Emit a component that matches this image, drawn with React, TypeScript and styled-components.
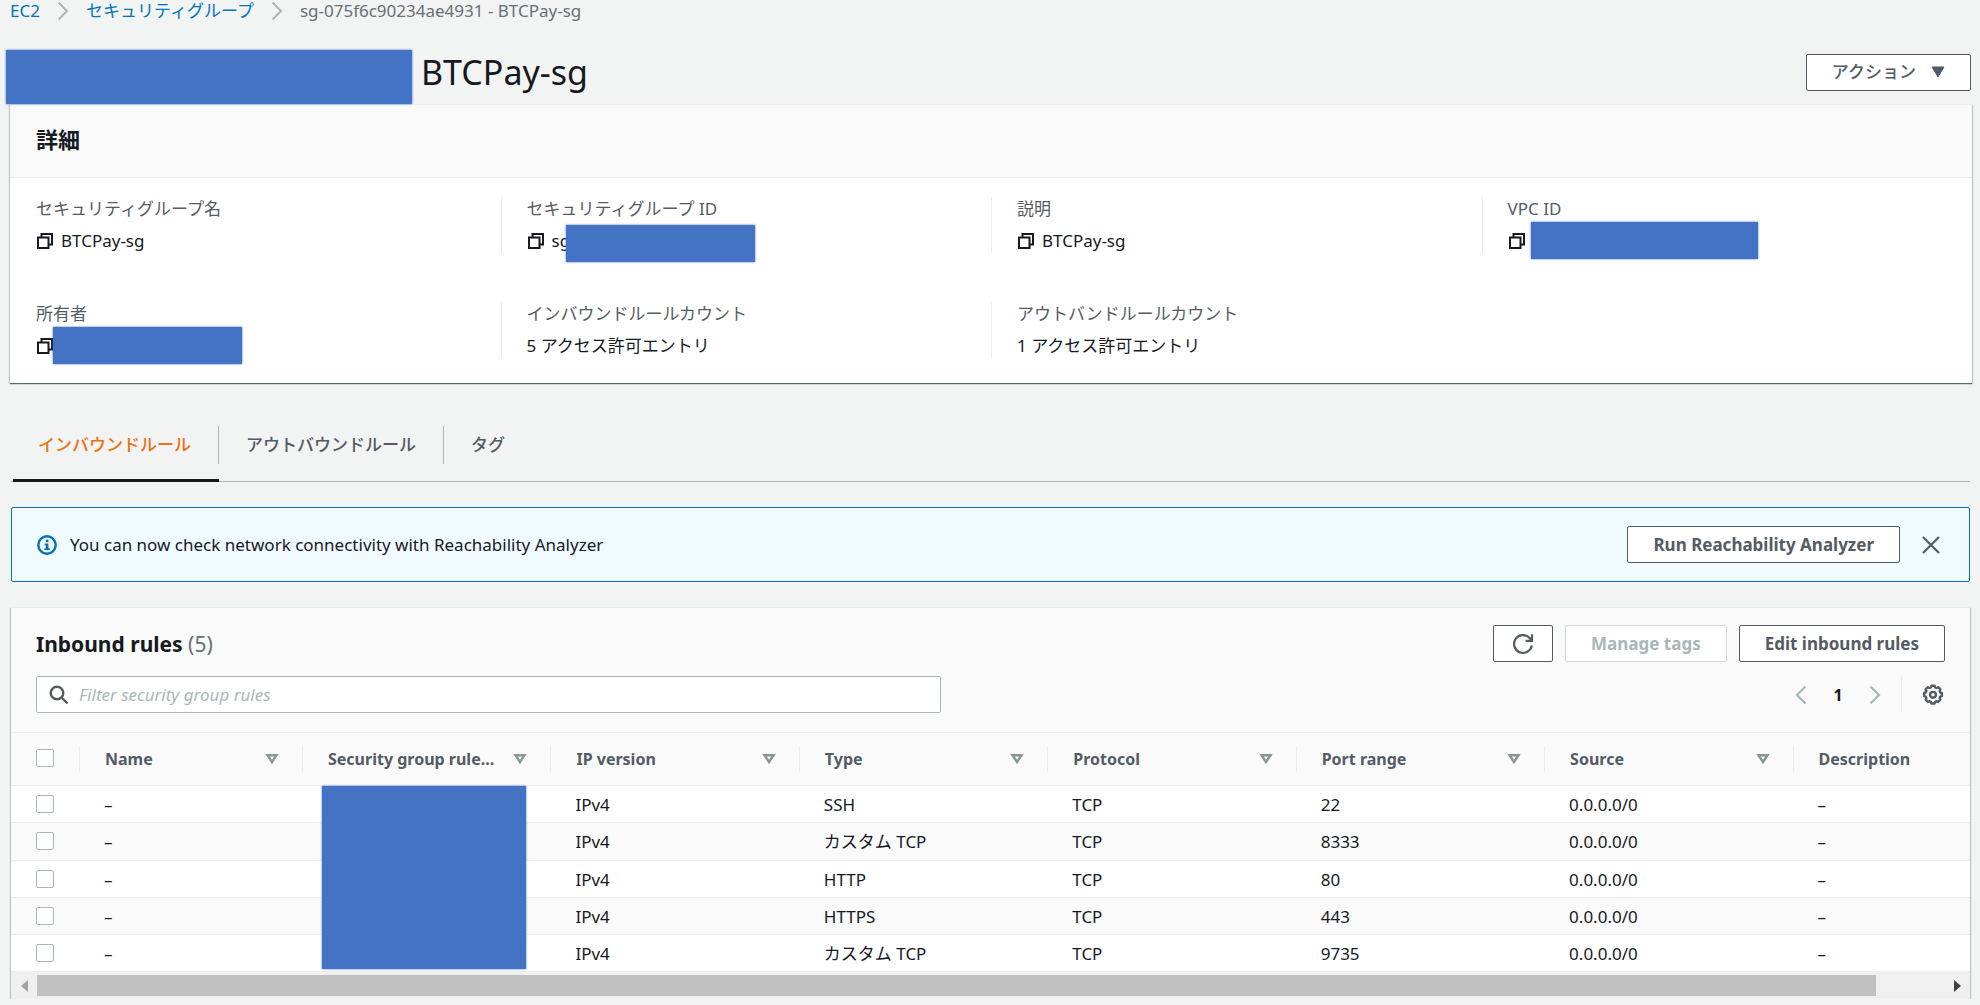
import React from "react";
import styled, { createGlobalStyle } from "styled-components";

const GlobalStyle = createGlobalStyle`
  *, *::before, *::after { box-sizing: border-box; }
  body {
    margin: 0;
    background: #f2f3f3;
    color: #16191f;
    font-family: "Noto Sans", "Noto Sans CJK JP", sans-serif;
    font-size: 17px;
    line-height: 24px;
  }
  h1, h2, dl, dt, dd, ol, p { margin: 0; padding: 0; }
  button, input { font-family: inherit; }
`;

const Page = styled.main`
  padding: 0 8px 0 10px;
`;

const Breadcrumbs = styled.ol`
  display: flex;
  align-items: center;
  height: 22px;
  list-style: none;
  color: #687078;
`;

const Crumb = styled.li`
  display: flex;
  align-items: center;
  white-space: nowrap;
`;

const CrumbLink = styled.a`
  color: #0073bb;
  text-decoration: none;
`;

const CrumbArrow = styled.svg`
  width: 12px;
  height: 20px;
  margin: 0 17px;
  fill: none;
  stroke: #aab7b8;
  stroke-width: 2;
`;

const PageHeader = styled.header`
  display: flex;
  align-items: center;
  justify-content: space-between;
  height: 46px;
  margin: 27px 1px 9px 0;
`;

const PageTitle = styled.h1`
  position: relative;
  padding-left: 411px;
  font-size: 34px;
  line-height: 44px;
  font-weight: 400;
`;

const Redaction = styled.span<{ $x: number; $y: number; $w: number; $h: number }>`
  position: absolute;
  left: ${(p) => p.$x}px;
  top: ${(p) => p.$y}px;
  width: ${(p) => p.$w}px;
  height: ${(p) => p.$h}px;
  background: #4472c4;
  box-shadow: 0 0 2px #4472c4;
  z-index: 1;
`;

const Button = styled.button<{ $japanese?: boolean }>`
  display: inline-flex;
  align-items: center;
  justify-content: center;
  gap: 15px;
  height: 37px;
  padding: 0 25px;
  background: #fff;
  border: 1px solid #545b64;
  border-radius: 2px;
  color: #545b64;
  font-size: 17px;
  font-weight: ${(p) => (p.$japanese ? 500 : 700)};
  line-height: 24px;
  white-space: nowrap;
  &:disabled {
    border-color: #d5dbdb;
    color: #aab7b8;
  }
`;

const RefreshButton = styled(Button)`
  width: 60px;
  padding: 0;
`;

const IconButton = styled.button`
  display: inline-flex;
  align-items: center;
  justify-content: center;
  width: 24px;
  height: 24px;
  padding: 0;
  border: 0;
  background: transparent;
  color: #545b64;
  &:disabled { color: #aab7b8; }
`;

const Card = styled.section`
  background: #fff;
  border-top: 1px solid #eaeded;
  box-shadow: 0 1px 1px rgba(0, 28, 36, 0.5), 1px 1px 1px rgba(0, 28, 36, 0.15),
    -1px 1px 1px rgba(0, 28, 36, 0.15);
`;

const CardHeader = styled.div`
  padding: 18px 26px 22px;
  background: #fafafa;
  border-bottom: 1px solid #eaeded;
`;

const CardTitle = styled.h2`
  font-size: 22px;
  line-height: 32px;
  font-weight: 700;
`;

const Details = styled.dl`
  display: grid;
  grid-template-columns: repeat(4, 1fr);
  row-gap: 49px;
  padding: 19px 0 25px;
`;

const Detail = styled.div<{ $divided: boolean }>`
  height: 56px;
  padding-left: 25px;
  border-left: 1px solid ${(p) => (p.$divided ? "#eaeded" : "transparent")};
`;

const DetailLabel = styled.dt`
  color: #545b64;
`;

const DetailValue = styled.dd`
  position: relative;
  display: flex;
  align-items: center;
  gap: 7px;
  margin-top: 8px;
  height: 24px;
`;

const CopyIcon = styled.svg`
  width: 18px;
  height: 18px;
  fill: #fff;
  stroke: #16191f;
  stroke-width: 2;
`;

const TabArea = styled.div`
  margin: 35px 2px 0 1px;
`;

const TabList = styled.div`
  display: flex;
  height: 64px;
  border-bottom: 1px solid #aab7b8;
`;

const Tab = styled.button<{ $active?: boolean }>`
  position: relative;
  padding: 10px 28px 20px 27px;
  border: 0;
  background: transparent;
  color: ${(p) => (p.$active ? "#ec7211" : "#545b64")};
  font-size: 17px;
  line-height: 24px;
  font-weight: 500;
  &:not(:last-child)::before {
    content: "";
    position: absolute;
    right: 0;
    top: 8px;
    height: 38px;
    border-right: 1px solid #aab7b8;
  }
  &::after {
    content: "";
    position: absolute;
    left: 2px;
    right: 0;
    bottom: -1px;
    height: ${(p) => (p.$active ? 3 : 0)}px;
    background: #16191f;
  }
`;

const Notice = styled.div`
  display: flex;
  align-items: center;
  height: 75px;
  margin-top: 25px;
  padding: 0 26px 0 25px;
  background: #f1faff;
  border: 1px solid #0073bb;
  border-radius: 2px;
`;

const InfoIcon = styled.svg`
  width: 20px;
  height: 20px;
  margin-right: 13px;
`;

const NoticeText = styled.p`
  flex: 1;
`;

const CloseButton = styled(IconButton)`
  margin-left: 19px;
`;

const RulesCard = styled(Card)`
  margin-top: 25px;
`;

const RulesHeader = styled.div`
  padding: 17px 25px 19px;
  background: #fafafa;
`;

const HeaderRow = styled.div`
  display: flex;
  align-items: center;
  justify-content: space-between;
  & + & { margin-top: 14px; }
`;

const RulesTitle = styled(CardTitle)`
  font-size: 21px;
  span { color: #687078; font-weight: 400; }
`;

const Actions = styled.div`
  display: flex;
  gap: 12px;
`;

const Search = styled.label`
  display: flex;
  align-items: center;
  gap: 10px;
  width: 47.4%;
  height: 37px;
  padding: 0 12px;
  background: #fff;
  border: 1px solid #aab7b8;
  border-radius: 2px;
  color: #545b64;
`;

const SearchInput = styled.input`
  flex: 1;
  min-width: 0;
  padding: 0;
  border: 0;
  outline: 0;
  background: transparent;
  color: #16191f;
  font-size: 17px;
  &::placeholder { color: #aab7b8; font-style: italic; opacity: 1; }
`;

const Pager = styled.div`
  display: flex;
  align-items: center;
`;

const PageNumber = styled.button`
  width: 50px;
  padding: 0;
  border: 0;
  background: transparent;
  color: #16191f;
  font-size: 16px;
  font-weight: 700;
`;

const Preferences = styled.div`
  display: flex;
  align-items: center;
  height: 37px;
  margin-left: 14px;
  padding-left: 19px;
  border-left: 1px solid #eaeded;
`;

const TableClip = styled.div`
  overflow: hidden;
`;

const TableStage = styled.div`
  position: relative;
`;

const Table = styled.table`
  width: 2030px;
  table-layout: fixed;
  border-collapse: separate;
  border-spacing: 0;
`;

const SelectColumn = styled.col`
  width: 68px;
`;

const NameColumn = styled.col`
  width: 223px;
`;

const HeadCell = styled.th`
  height: 54px;
  padding: 0 23px 0 0;
  background: #fafafa;
  border-top: 1px solid #eaeded;
  border-bottom: 1px solid #eaeded;
  color: #545b64;
  text-align: left;
  font-size: 16px;
  font-weight: 700;
`;

const HeadContent = styled.div`
  display: flex;
  align-items: center;
  justify-content: space-between;
  gap: 8px;
  height: 26px;
  padding-left: 25px;
  border-left: 1px solid #eaeded;
  span {
    overflow: hidden;
    white-space: nowrap;
    text-overflow: ellipsis;
  }
  svg { flex: none; }
`;

const Row = styled.tr`
  height: 37px;
  &:nth-child(even) { background: #fafafa; }
  &:nth-child(2) { height: 38px; }
`;

const Cell = styled.td`
  padding: 1px 25px 0;
  border-bottom: 1px solid #eaeded;
  white-space: nowrap;
`;

const HeadCheckCell = styled(HeadCell)`
  padding: 0 0 0 25px;
`;

const Checkbox = styled.input`
  appearance: none;
  display: block;
  width: 18px;
  height: 18px;
  margin: 0 0 2px;
  background: #fff;
  border: 1px solid #aab7b8;
  border-radius: 2px;
`;

const Scrollbar = styled.div`
  display: flex;
  align-items: center;
  height: 27px;
  background: #f0f0f0;
`;

const ScrollArrow = styled.button<{ $muted?: boolean }>`
  display: flex;
  align-items: center;
  justify-content: center;
  width: 26px;
  height: 21px;
  padding: 0;
  border: 0;
  background: transparent;
  color: ${(p) => (p.$muted ? "#a3a3a3" : "#404040")};
`;

const ScrollTrack = styled.div`
  flex: 1;
  padding-right: 68px;
`;

const ScrollThumb = styled.div`
  height: 21px;
  background: #c1c1c1;
`;

const Separator = () => (
  <CrumbArrow viewBox="0 0 12 20" aria-hidden="true">
    <path d="M1.5 1.5 10 10l-8.5 8.5" />
  </CrumbArrow>
);

const Copy = () => (
  <CopyIcon viewBox="0 0 18 18" aria-hidden="true">
    <path d="M5.5 2H16v10.500H5.500z" />
    <path d="M2 5.500h10.500V16H2z" />
  </CopyIcon>
);

const FilterTriangle = () => (
  <svg width="14" height="12" viewBox="0 0 14 12" fill="none" stroke="#879596" strokeWidth="2.400" aria-hidden="true">
    <path d="M2.500 2.200h9L7 9z" />
  </svg>
);

type Mask = { x: number; y: number; w: number; h: number };
type DetailItem = { label: string; value: string; copy?: boolean; mask?: Mask };

const details: DetailItem[] = [
  { label: "セキュリティグループ名", value: "BTCPay-sg", copy: true },
  { label: "セキュリティグループ ID", value: "sg", copy: true, mask: { x: 39, y: -4, w: 189, h: 37 } },
  { label: "説明", value: "BTCPay-sg", copy: true },
  { label: "VPC ID", value: "", copy: true, mask: { x: 23, y: -7, w: 227, h: 37 } },
  { label: "所有者", value: "", copy: true, mask: { x: 17, y: -7, w: 189, h: 37 } },
  { label: "インバウンドルールカウント", value: "5 アクセス許可エントリ" },
  { label: "アウトバンドルールカウント", value: "1 アクセス許可エントリ" },
];

const columns = ["Name", "Security group rule...", "IP version", "Type", "Protocol", "Port range", "Source"];

const rules = [
  { type: "SSH", port: "22" },
  { type: "カスタム TCP", port: "8333" },
  { type: "HTTP", port: "80" },
  { type: "HTTPS", port: "443" },
  { type: "カスタム TCP", port: "9735" },
];

export default function App() {
  return (
    <>
      <GlobalStyle />
      <Page>
        <nav aria-label="breadcrumb">
          <Breadcrumbs>
            <Crumb>
              <CrumbLink href="#ec2">EC2</CrumbLink>
              <Separator />
            </Crumb>
            <Crumb>
              <CrumbLink href="#groups">セキュリティグループ</CrumbLink>
              <Separator />
            </Crumb>
            <Crumb>sg-075f6c90234ae4931 - BTCPay-sg</Crumb>
          </Breadcrumbs>
        </nav>

        <PageHeader>
          <PageTitle>
            <Redaction $x={-4} $y={0} $w={406} $h={54} />
            BTCPay-sg
          </PageTitle>
          <Button type="button" $japanese aria-haspopup="menu">
            アクション
            <svg width="14" height="12" viewBox="0 0 14 12" fill="currentColor" aria-hidden="true">
              <path d="M1 1h12L7 11z" stroke="currentColor" strokeLinejoin="round" />
            </svg>
          </Button>
        </PageHeader>

        <Card>
          <CardHeader>
            <CardTitle>詳細</CardTitle>
          </CardHeader>
          <Details>
            {details.map((d, i) => (
              <Detail key={d.label} $divided={i % 4 !== 0}>
                <DetailLabel>{d.label}</DetailLabel>
                <DetailValue>
                  {d.copy && <Copy />}
                  {d.value}
                  {d.mask && <Redaction $x={d.mask.x} $y={d.mask.y} $w={d.mask.w} $h={d.mask.h} />}
                </DetailValue>
              </Detail>
            ))}
          </Details>
        </Card>

        <TabArea>
          <TabList role="tablist">
            <Tab type="button" role="tab" aria-selected="true" $active>インバウンドルール</Tab>
            <Tab type="button" role="tab" aria-selected="false">アウトバウンドルール</Tab>
            <Tab type="button" role="tab" aria-selected="false">タグ</Tab>
          </TabList>

          <Notice>
            <InfoIcon viewBox="0 0 20 20" aria-hidden="true">
              <circle cx="10" cy="10" r="8.700" fill="none" stroke="#0073bb" strokeWidth="2.400" />
              <path d="M8.800 4.800h2.600v2.400H8.800zM7.600 8.500h3.800v4.700h1.300v1.800H7.400v-1.800h1.400v-2.900H7.600z" fill="#0073bb" />
            </InfoIcon>
            <NoticeText>You can now check network connectivity with Reachability Analyzer</NoticeText>
            <Button type="button">Run Reachability Analyzer</Button>
            <CloseButton type="button" aria-label="Close">
              <svg width="18" height="18" viewBox="0 0 18 18" fill="none" stroke="currentColor" strokeWidth="2.200">
                <path d="M1 1l16 16M17 1L1 17" />
              </svg>
            </CloseButton>
          </Notice>

          <RulesCard>
            <RulesHeader>
              <HeaderRow>
                <RulesTitle>
                  Inbound rules <span>(5)</span>
                </RulesTitle>
                <Actions>
                  <RefreshButton type="button" aria-label="Refresh">
                    <svg width="22" height="22" viewBox="0 0 22 22" fill="none" stroke="currentColor" strokeWidth="2.200">
                      <path d="M19.800 12.300A8.900 8.900 0 1 1 17.800 5.200L20 7.600" />
                      <path d="M20 1.200v6.600h-6.400" />
                    </svg>
                  </RefreshButton>
                  <Button type="button" disabled>Manage tags</Button>
                  <Button type="button">Edit inbound rules</Button>
                </Actions>
              </HeaderRow>
              <HeaderRow>
                <Search>
                  <svg width="20" height="20" viewBox="0 0 20 20" fill="none" stroke="currentColor" strokeWidth="2.400" aria-hidden="true">
                    <circle cx="8" cy="8" r="6.300" />
                    <path d="M12.500 12.500l6 6" />
                  </svg>
                  <SearchInput type="text" aria-label="Filter security group rules" placeholder="Filter security group rules" />
                </Search>
                <Pager>
                  <IconButton type="button" aria-label="Previous page" disabled>
                    <svg width="12" height="20" viewBox="0 0 12 20" fill="none" stroke="currentColor" strokeWidth="2.200">
                      <path d="M10.500 1.500 2 10l8.500 8.500" />
                    </svg>
                  </IconButton>
                  <PageNumber type="button">1</PageNumber>
                  <IconButton type="button" aria-label="Next page" disabled>
                    <svg width="12" height="20" viewBox="0 0 12 20" fill="none" stroke="currentColor" strokeWidth="2.200">
                      <path d="M1.500 1.500 10 10l-8.500 8.500" />
                    </svg>
                  </IconButton>
                  <Preferences>
                    <IconButton type="button" aria-label="Preferences">
                      <svg width="22" height="22" viewBox="0 0 22 22" fill="none" stroke="currentColor" strokeWidth="2.400" strokeLinejoin="round">
                        <path d="M8.900 3.400 9.400 1.800h3.200l.5 1.600 1.500.6 1.500-.8 2.300 2.200-.8 1.600.7 1.500 1.600.5v3.200l-1.700.5-.6 1.500.8 1.500-2.300 2.300-1.500-.8-1.500.6-.5 1.700H9.400l-.5-1.700-1.500-.6-1.500.8-2.300-2.300.8-1.500-.6-1.500-1.700-.5V9l1.600-.5.7-1.500-.8-1.600 2.300-2.200 1.500.8z" />
                        <circle cx="11" cy="10.800" r="2.900" />
                      </svg>
                    </IconButton>
                  </Preferences>
                </Pager>
              </HeaderRow>
            </RulesHeader>

            <TableClip>
              <TableStage>
                <Table>
                  <colgroup>
                    <SelectColumn />
                    <NameColumn />
                    <col span={7} />
                  </colgroup>
                  <thead>
                    <tr>
                      <HeadCheckCell>
                        <Checkbox type="checkbox" aria-label="Select all rules" />
                      </HeadCheckCell>
                      {columns.map((c) => (
                        <HeadCell key={c} scope="col">
                          <HeadContent>
                            <span>{c}</span>
                            <FilterTriangle />
                          </HeadContent>
                        </HeadCell>
                      ))}
                      <HeadCell scope="col">
                        <HeadContent>
                          <span>Description</span>
                        </HeadContent>
                      </HeadCell>
                    </tr>
                  </thead>
                  <tbody>
                    {rules.map((r) => (
                      <Row key={r.port}>
                        <Cell>
                          <Checkbox type="checkbox" aria-label={`Select rule for port ${r.port}`} />
                        </Cell>
                        <Cell>–</Cell>
                        <Cell />
                        <Cell>IPv4</Cell>
                        <Cell>{r.type}</Cell>
                        <Cell>TCP</Cell>
                        <Cell>{r.port}</Cell>
                        <Cell>0.0.0.0/0</Cell>
                        <Cell>–</Cell>
                      </Row>
                    ))}
                  </tbody>
                </Table>
                <Redaction $x={311} $y={54} $w={204} $h={183} />
              </TableStage>
            </TableClip>
            <Scrollbar>
              <ScrollArrow type="button" aria-label="Scroll left" $muted>
                <svg width="7" height="12" viewBox="0 0 7 12" fill="currentColor"><path d="M7 0v12L0 6z" /></svg>
              </ScrollArrow>
              <ScrollTrack>
                <ScrollThumb />
              </ScrollTrack>
              <ScrollArrow type="button" aria-label="Scroll right">
                <svg width="7" height="12" viewBox="0 0 7 12" fill="currentColor"><path d="M0 0v12l7-6z" /></svg>
              </ScrollArrow>
            </Scrollbar>
          </RulesCard>
        </TabArea>
      </Page>
    </>
  );
}
